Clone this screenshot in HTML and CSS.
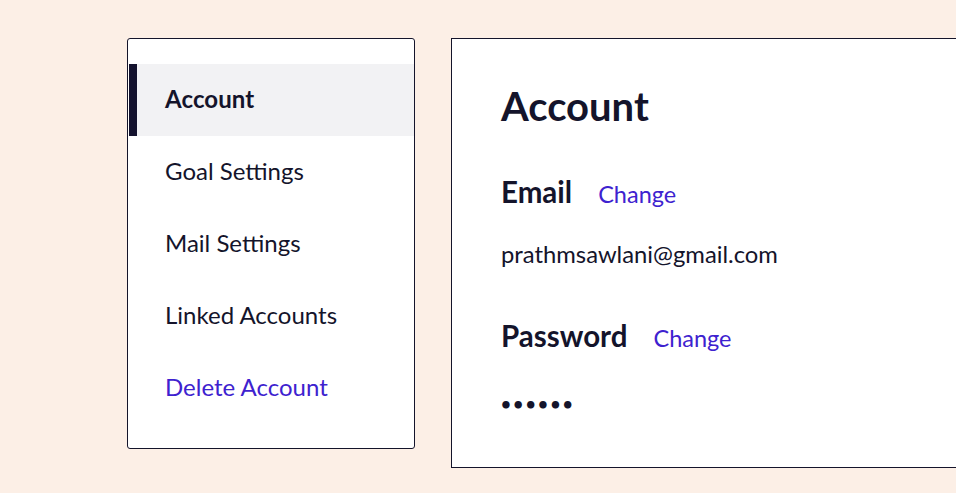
FILE: index.html
```html
<!DOCTYPE html>
<html lang="en">
<head>
<meta charset="utf-8">
<title>Account Settings</title>
<link rel="stylesheet" href="styles.css">
</head>
<body>
<div class="page">
  <nav class="sidebar">
    <ul class="menu">
      <li class="menu-item active">Account</li>
      <li class="menu-item">Goal Settings</li>
      <li class="menu-item">Mail Settings</li>
      <li class="menu-item">Linked Accounts</li>
      <li class="menu-item danger">Delete Account</li>
    </ul>
  </nav>
  <main class="panel">
    <h1 class="title">Account</h1>
    <section class="field">
      <div class="field-head">
        <h2 class="field-label">Email</h2>
        <a class="change">Change</a>
      </div>
      <p class="field-value">prathmsawlani@gmail.com</p>
    </section>
    <section class="field">
      <div class="field-head">
        <h2 class="field-label">Password</h2>
        <a class="change">Change</a>
      </div>
      <p class="field-value dots">••••••</p>
    </section>
  </main>
</div>
</body>
</html>
```
FILE: styles.css
```css
html, body {
  margin: 0;
  padding: 0;
}
body {
  background: #fcefe6;
  font-family: Lato, "Noto Sans", sans-serif;
  color: #14142b;
  overflow: hidden;
}
.page {
  display: flex;
  align-items: flex-start;
  gap: 36px;
  padding: 38px 0 0 127px;
  width: 1100px;
}
.sidebar {
  width: 285px;
  background: #fff;
  border: 1px solid #14142b;
  border-radius: 3px;
  padding: 25px 0 24px 1px;
}
.menu {
  list-style: none;
  margin: 0;
  padding: 0;
}
.menu-item {
  height: 72px;
  display: flex;
  align-items: center;
  padding: 0 0 3px 28px;
  font-size: 24px;
  border-left: 8px solid transparent;
  box-sizing: border-box;
}
.menu-item.active {
  background: #f2f2f4;
  border-left-color: #14122e;
  font-weight: 700;
  letter-spacing: 0.1px;
}
.menu-item.danger {
  color: #3e22cf;
}
.panel {
  width: 560px;
  height: 428px;
  background: #fff;
  border: 1px solid #14142b;
  padding: 0 0 0 49px;
}
.title {
  margin: 44px 0 0;
  font-size: 40px;
  line-height: 46px;
  font-weight: 700;
}
.field {
  margin-top: 45px;
}
.field + .field {
  margin-top: 51px;
}
.field-head {
  display: flex;
  align-items: baseline;
  gap: 26px;
}
.field-label {
  margin: 0;
  font-size: 29.5px;
  line-height: 36px;
  font-weight: 700;
}
.change {
  font-size: 23.5px;
  color: #3e22cf;
}
.field-value {
  margin: 31px 0 0;
  font-size: 23.8px;
  line-height: 26px;
}
.dots {
  margin-top: 37px;
  font-size: 17px;
  font-weight: 700;
  letter-spacing: 2.5px;
}
```
